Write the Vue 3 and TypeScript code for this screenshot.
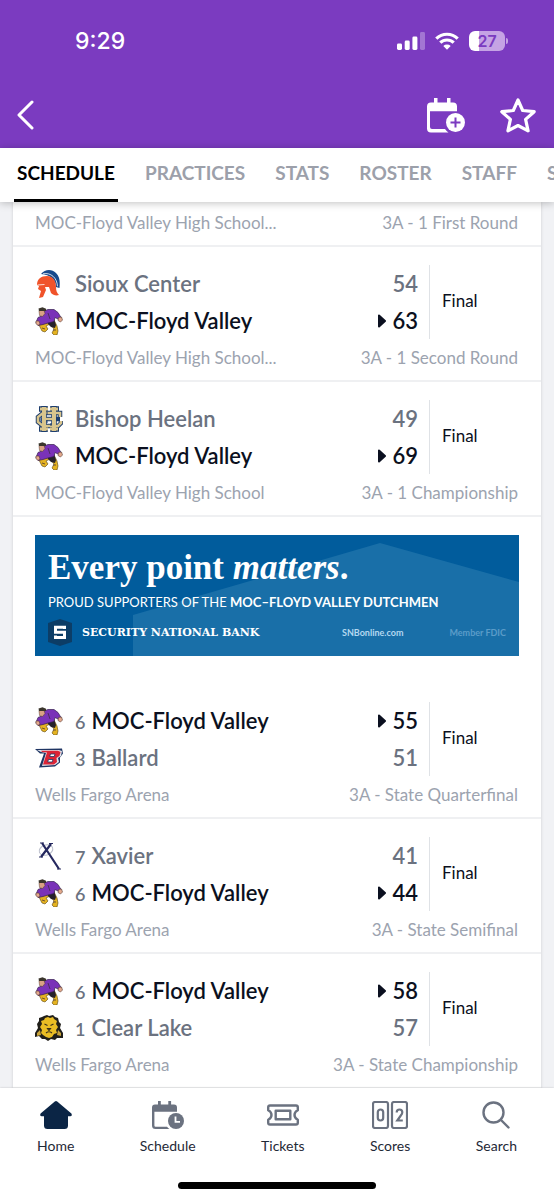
<script setup lang="ts">
import { ref } from 'vue'

interface Team {
  logo: string
  name: string
  score: number
  rank?: number
  winner?: boolean
}

interface Game {
  teams: Team[]
  venue: string
  round: string
}

const tabs: string[] = ['Schedule', 'Practices', 'Stats', 'Roster', 'Staff', 'S']
const activeTab = ref<string>('Schedule')

const moc = (score: number, winner: boolean, rank?: number): Team => ({
  logo: 'moc',
  name: 'MOC-Floyd Valley',
  score,
  winner,
  rank,
})

const earlier: Game[] = [
  {
    teams: [{ logo: 'sioux', name: 'Sioux Center', score: 54 }, moc(63, true)],
    venue: 'MOC-Floyd Valley High School...',
    round: '3A - 1 Second Round',
  },
  {
    teams: [{ logo: 'heelan', name: 'Bishop Heelan', score: 49 }, moc(69, true)],
    venue: 'MOC-Floyd Valley High School',
    round: '3A - 1 Championship',
  },
]

const state: Game[] = [
  {
    teams: [moc(55, true, 6), { logo: 'ballard', name: 'Ballard', score: 51, rank: 3 }],
    venue: 'Wells Fargo Arena',
    round: '3A - State Quarterfinal',
  },
  {
    teams: [{ logo: 'xavier', name: 'Xavier', score: 41, rank: 7 }, moc(44, true, 6)],
    venue: 'Wells Fargo Arena',
    round: '3A - State Semifinal',
  },
  {
    teams: [moc(58, true, 6), { logo: 'clear', name: 'Clear Lake', score: 57, rank: 1 }],
    venue: 'Wells Fargo Arena',
    round: '3A - State Championship',
  },
]

const groups = [
  { id: 'regional', games: earlier },
  { id: 'state', games: state },
]
</script>

<template>
  <div class="app">
    <svg class="defs" aria-hidden="true">
      <symbol id="logo-moc" viewBox="0 0 28 28">
        <path d="M6 14 4 18l3 6 3 1 3-3-2-3 4-2 4 5-2 4 2 2h3l1-4-1-5-3-6z" fill="#e5b321" stroke="#5a4512" stroke-width=".6" />
        <path d="m12 13 7-1 2 6-1 3-4-1-3-3z" fill="#26222b" />
        <path d="M9 4 13 2.500l6 0 4 3 3 5-2 2-4-2-1 4-6 1.500-5 1.500-5 1-2-3 2-5 5-2z" fill="#7a32b8" stroke="#35204f" stroke-width=".7" />
        <path d="m23.500 10.500 3-.5 1 3-2 2-2.500-1.500zM1 14l3 0 1 3-2 1.500-2-2z" fill="#e4a98c" stroke="#573c33" stroke-width=".6" />
        <path d="M4 3.500h5l1 3-2.500 3-3-1z" fill="#d9a184" stroke="#573c33" stroke-width=".5" />
        <path d="m3.500 1.500 4-1.300 3.500 1.500v2.300H4z" fill="#3a352b" />
        <path d="m7 21 3 1M18 23l3 0M13 6l2 6" fill="none" stroke="#3b2a3a" stroke-width=".7" />
      </symbol>
      <symbol id="logo-sioux" viewBox="0 0 28 28">
        <path d="M6 4C10-1 17-1 21 3c4 4 4 9 3.500 15L21 17C21 9 15 5 6 4z" fill="#174a8c" />
        <path d="M8 3.800c8-1.500 14 4 14.500 12.500" fill="none" stroke="#fff" stroke-width=".8" />
        <path d="M2 15C2 9 6 6 12 6c7 0 9 6 9 11 0 4 1 6 3 8-3 1-6 0-8-2l-2-6-4 0 1 3-3 7-4 1 2-7-3-2 1-3z" fill="#f0532a" />
        <path d="m2.500 15 7-.5" stroke="#fff" stroke-width=".8" />
      </symbol>
      <symbol id="logo-heelan" viewBox="0 0 28 28">
        <g fill="none" stroke="#1d3d6d">
          <path d="M9 1v26M19 1v26M4 4h9M15 4h9M4 24h9M15 24h9" stroke-width="5.500" />
          <path d="M25 12V8H8L3 12v5l5 4h15l3-3v-2M8 14h17" stroke-width="4.500" />
        </g>
        <g fill="none" stroke="#d9c58d">
          <path d="M9 2v24M19 2v24" stroke-width="4" />
          <path d="M5 4h8M15 4h8M5 24h8M15 24h8" stroke-width="3" />
          <path d="M25 12V8H8L3 12v5l5 4h15l3-3v-2M10 14h9" stroke-width="2.600" />
        </g>
        <path d="M12 7v3M16 18v3M6 13v3M12 18v-3" fill="none" stroke="#1d3d6d" stroke-width="1" />
      </symbol>
      <symbol id="logo-ballard" viewBox="0 0 28 28">
        <path d="M0 5 27 4.500l1 5-3 4 0 5-5 4-16 1 5-14-4 0z" fill="#1f3563" />
        <path d="M2 6h22l3 1-1 5-3 2 1 4-4 3-13 1 4-13-5-1z" fill="#dfe3ea" />
        <path d="M6 6.800h17l2.500 1.200-1 4-3 2 .5 4-3 2.500H8l4-12-5-.5z" fill="#dc2436" />
        <path d="m15.500 10 4.500 0-.8 2.500h-4.500zM13.500 15.500h4.500l-.8 2.500h-4.500z" fill="#fff" stroke="#1f3563" stroke-width=".8" />
      </symbol>
      <symbol id="logo-xavier" viewBox="0 0 28 28">
        <ellipse cx="11" cy="8" rx="7" ry="5" fill="none" stroke="#b9bdca" stroke-width="1" transform="rotate(-20 11 8)" />
        <path d="m7 1 17 26M16 2 6 15" stroke="#25285f" stroke-width="2.200" fill="none" />
        <path d="M5 1h4M14 1.500h4M4 15h4M22 27h4" stroke="#25285f" stroke-width="1.200" />
      </symbol>
      <symbol id="logo-clear" viewBox="0 0 28 28">
        <path d="m9 2 3-1 2 1 4-1 2 2 3 1 1 4 2 2-1 4 3 5 0 5-6 0-2 2-4-1-3 2-3-2-3 0-3-3-4 1 0-4 3-5-1-4 2-3 0-3 3-1z" fill="#211f1a" />
        <path d="m10 4 3-1 2 1 3-1 1 2 3 2-1 3 2 3-2 3 1 3-3 1-2 3-3 1-3-1-3-2-2-2 1-3-2-3 2-3-1-3 3-1z" fill="#eabd24" />
        <path d="m2 19 3-3 1 5-4 1zM23 16l3 3 0 3-4-1z" fill="#c9a43a" />
        <path d="m9.500 10 3 1.500m6-1.500-3 1.500M12.500 14.500h3L14 16.500zM11 19q3-2.500 6 0" stroke="#39301a" stroke-width="1.100" fill="none" />
      </symbol>
    </svg>

    <header class="header">
      <div class="status">
        <time class="clock">9:29</time>
        <div class="indicators">
          <svg width="28" height="18" viewBox="0 0 28 18" fill="#fff" aria-label="Signal">
            <rect x="0" y="11.500" width="5" height="6.500" rx="1.400" />
            <rect x="7.700" y="8.500" width="5" height="9.500" rx="1.400" />
            <rect x="15.400" y="4.500" width="5" height="13.500" rx="1.400" />
            <rect x="23" y="0" width="5" height="18" rx="1.400" opacity=".3" />
          </svg>
          <svg width="24" height="18" viewBox="0 0 24 18" fill="none" stroke="#fff" stroke-width="3.200" aria-label="Wi-Fi">
            <path d="M1.300 6.600a15.300 15.300 0 0 1 21.400 0" />
            <path d="M5.300 10.700a9.600 9.600 0 0 1 13.400 0" />
            <path d="M8.300 14 12 17.800 15.700 14a5.400 5.400 0 0 0-7.400 0z" fill="#fff" stroke="none" />
          </svg>
          <div class="battery"><span>27</span></div>
        </div>
      </div>
      <div class="actions">
        <button type="button" class="icon-button" aria-label="Back">
          <svg width="18" height="30" viewBox="0 0 18 30" fill="none" stroke="#fff" stroke-width="3" stroke-linecap="round" stroke-linejoin="round">
            <path d="M16 2 3 15l13 13" />
          </svg>
        </button>
        <div class="action-group">
          <button type="button" class="icon-button" aria-label="Add to calendar">
            <svg width="38" height="35" viewBox="0 0 38 35">
              <path d="M7 0h3.500v4.500H20V0h3.500v4.500H26a4 4 0 0 1 4 4v4.800H3V29q0 2 2 2h13q1.500 2 3.500 3.500H4a4 4 0 0 1-4-4v-22a4 4 0 0 1 4-4h3z" fill="#fff" />
              <circle cx="28.500" cy="24.500" r="9.500" fill="#fff" />
              <path d="M28.500 19.500v10M23.500 24.500h10" stroke="#7b3bc0" stroke-width="2" />
            </svg>
          </button>
          <button type="button" class="icon-button" aria-label="Favorite">
            <svg width="36" height="35" viewBox="0 0 36 35" fill="none" stroke="#fff" stroke-width="3.200" stroke-linejoin="round">
              <path d="m18 2 4.700 10.500 11.500 1.200-8.600 7.700 2.500 11.400L18 27.500 7.900 32.800l2.500-11.400-8.600-7.700 11.500-1.200z" />
            </svg>
          </button>
        </div>
      </div>
    </header>

    <nav class="tabs" aria-label="Team pages">
      <button
        v-for="tab in tabs"
        :key="tab"
        type="button"
        class="tab"
        :class="{ active: tab === activeTab }"
        @click="activeTab = tab"
      >
        {{ tab }}
      </button>
    </nav>

    <main class="content">
      <div class="card">
        <div class="game partial">
          <div class="meta">
            <span>MOC-Floyd Valley High School...</span>
            <span>3A - 1 First Round</span>
          </div>
        </div>
        <template v-for="group in groups" :key="group.id">
          <a v-if="group.id === 'state'" href="#" class="ad">
            <svg class="ad-shape" viewBox="0 0 484 121" preserveAspectRatio="none" aria-hidden="true">
              <path d="M98 121V80L345 8l139 39v74z" fill="#196fa8" />
            </svg>
            <span class="ad-title">Every point <em>matters</em>.</span>
            <span class="ad-sub">PROUD SUPPORTERS OF THE <b>MOC–FLOYD VALLEY DUTCHMEN</b></span>
            <span class="ad-foot">
              <svg width="24" height="27" viewBox="0 0 24 27" aria-hidden="true">
                <path d="m12 0 12 4v19l-12 4-12-4V4z" fill="#0c3d66" />
                <path d="M16.500 10V8.300H7.500v5h9v5.200H7.500V16.500" fill="none" stroke="#fff" stroke-width="3" />
              </svg>
              <span class="bank">SECURITY NATIONAL BANK</span>
              <span class="site">SNBonline.com</span>
              <span class="fdic">Member FDIC</span>
            </span>
          </a>
          <article v-for="game in group.games" :key="game.round" class="game">
            <div class="matchup">
              <div class="teams">
                <div v-for="team in game.teams" :key="team.name" class="team" :class="{ winner: team.winner }">
                  <svg class="logo" width="28" height="28" aria-hidden="true"><use :href="'#logo-' + team.logo" /></svg>
                  <span class="name"><span v-if="team.rank" class="rank">{{ team.rank }}</span>{{ team.name }}</span>
                  <svg v-if="team.winner" width="8" height="14" viewBox="0 0 8 14" aria-label="Winner">
                    <path d="M1 1.500v11L7 7z" fill="#0b1020" stroke="#0b1020" stroke-width="2" stroke-linejoin="round" />
                  </svg>
                  <span class="score">{{ team.score }}</span>
                </div>
              </div>
              <div class="result">Final</div>
            </div>
            <div class="meta">
              <span>{{ game.venue }}</span>
              <span>{{ game.round }}</span>
            </div>
          </article>
        </template>
      </div>
    </main>

    <footer class="bottom">
      <nav class="bottom-nav" aria-label="Main">
        <a href="#" class="nav-item">
          <svg width="32" height="28" viewBox="0 0 32 28">
            <path d="M14.800.5q1.200-.9 2.400 0L31.400 12.500q1.200 2.500-1.200 2.800H28V24.500q0 3.500-3.500 3.500h-17Q4 28 4 24.500V15.300H1.800Q-.6 15 .6 12.500z" fill="#0b2545" />
          </svg>
          Home
        </a>
        <a href="#" class="nav-item">
          <svg width="32" height="28" viewBox="0 0 32 28">
            <path d="M6 0h2.800v3.500h7.500V0h2.800v3.500H22a3 3 0 0 1 3 3v4.200H2.400V24.500q0 1.200 1.200 1.200H15q1 1.500 2.500 2.300H3.500A3.500 3.500 0 0 1 0 24.500v-18a3 3 0 0 1 3-3h3z" fill="#6b7280" />
            <circle cx="24" cy="20" r="8" fill="#6b7280" />
            <path d="M23.500 15.500v5.300H28" fill="none" stroke="#fff" stroke-width="1.800" />
          </svg>
          Schedule
        </a>
        <a href="#" class="nav-item">
          <svg width="32" height="28" viewBox="0 0 32 28" fill="none" stroke="#6b7280" stroke-width="2.400" stroke-linejoin="round">
            <path d="M3 4.500h26q1.800 0 1.800 1.800v3Q27.500 11 27.500 14t3.300 4.700v3q0 1.800-1.800 1.800H3q-1.800 0-1.800-1.800v-3Q4.500 17 4.500 14T1.200 9.300v-3Q1.200 4.500 3 4.500z" />
            <rect x="8.700" y="9.700" width="14.600" height="8.600" />
          </svg>
          Tickets
        </a>
        <a href="#" class="nav-item">
          <svg width="36" height="28" viewBox="0 0 36 28" fill="none" stroke="#6b7280" stroke-width="2.200">
            <rect x="1" y="1" width="15" height="26" rx="2" />
            <rect x="20" y="1" width="15" height="26" rx="2" />
            <rect x="5.800" y="8.500" width="5.400" height="11" rx="2.700" />
            <path d="M24.700 11.500q0-3 2.800-3t2.800 2.800q0 1.500-1.500 3.200l-3.500 5h5.500" />
          </svg>
          Scores
        </a>
        <a href="#" class="nav-item">
          <svg width="28" height="28" viewBox="0 0 28 28" fill="none" stroke="#6b7280" stroke-width="2.400" stroke-linecap="round">
            <circle cx="11.500" cy="11.500" r="10" />
            <path d="m19 19 7.500 7.500" />
          </svg>
          Search
        </a>
      </nav>
      <div class="home-bar"></div>
    </footer>
  </div>
</template>

<style>
html,
body,
#app {
  height: 100%;
}
body {
  margin: 0;
}
</style>

<style scoped>
.app {
  display: flex;
  flex-direction: column;
  height: 100vh;
  overflow: hidden;
  background: #f1f2f5;
  font-family: Lato, "Liberation Sans", sans-serif;
  color: #0b1020;
}
.defs {
  position: absolute;
  width: 0;
  height: 0;
}
button {
  border: 0;
  background: none;
  padding: 0;
  font: inherit;
  color: inherit;
}
a {
  color: inherit;
  text-decoration: none;
}
svg {
  display: block;
  flex: none;
}
.header {
  flex: none;
  background: #7b3bc0;
  color: #fff;
}
.status {
  display: flex;
  align-items: center;
  justify-content: space-between;
  height: 82px;
  padding: 0 49px 0 75px;
}
.clock {
  font: 500 23px/28px Inter, sans-serif;
}
.indicators {
  display: flex;
  align-items: center;
  gap: 10px;
}
.battery {
  position: relative;
  width: 36px;
  height: 20px;
  border-radius: 6px;
  background: linear-gradient(90deg, #fff 10px, #c5a3e4 10px);
  color: #7b3bc0;
  text-align: center;
  font: 600 16px/20px Inter, sans-serif;
}
.battery::after {
  content: "";
  position: absolute;
  right: -3px;
  top: 7px;
  width: 2px;
  height: 6px;
  border-radius: 0 2px 2px 0;
  background: #c5a3e4;
}
.actions {
  display: flex;
  align-items: center;
  justify-content: space-between;
  height: 66px;
  padding: 0 18px 0 16px;
}
.action-group {
  display: flex;
  align-items: center;
  gap: 35px;
}
.tabs {
  position: relative;
  z-index: 1;
  flex: none;
  display: flex;
  gap: 24px;
  height: 54px;
  padding: 0 14px;
  overflow: hidden;
  background: #fff;
  box-shadow: 0 1px 8px rgba(0, 0, 0, 0.25);
}
.tab {
  flex: none;
  padding: 0 3px 2px;
  border-bottom: 3px solid transparent;
  color: #9ca0aa;
  font-size: 19px;
  font-weight: 700;
  text-transform: uppercase;
}
.tab.active {
  color: #000;
  border-color: #000;
}
.content {
  flex: 1;
  min-height: 0;
  overflow: hidden;
  padding: 0 13px;
}
.card {
  background: #fff;
  box-shadow: 0 0 3px rgba(0, 0, 0, 0.15);
}
.game {
  padding: 18px 23px 3px 22px;
  border-bottom: 2px solid #eff0f2;
}
.partial {
  padding-top: 2px;
}
.matchup {
  display: flex;
}
.teams {
  flex: 1;
  padding-right: 11px;
  border-right: 1px solid #dfe2e6;
}
.team {
  display: flex;
  align-items: center;
  height: 37px;
  color: #6b7280;
  font-size: 22px;
  font-weight: 600;
}
.winner {
  color: #0b1020;
}
.name {
  flex: 1;
  padding-left: 12px;
}
.rank {
  margin-right: 6px;
  color: #6b7280;
  font-size: 18px;
}
.score {
  padding-left: 6px;
}
.result {
  box-sizing: border-box;
  display: flex;
  align-items: center;
  width: 88px;
  padding: 0 0 3px 12px;
  font-size: 17px;
}
.meta {
  display: flex;
  justify-content: space-between;
  color: #9ca3af;
  font-size: 17px;
  line-height: 38px;
}
.ad {
  position: relative;
  display: flex;
  flex-direction: column;
  height: 121px;
  margin: 18px 22px 28px;
  box-sizing: border-box;
  padding: 12px 13px 8px;
  background: #015c9c;
  color: #fff;
}
.ad-shape {
  position: absolute;
  inset: 0;
  width: 100%;
  height: 100%;
}
.ad-title,
.ad-sub,
.ad-foot {
  position: relative;
}
.ad-title {
  font: 700 35px/42px "Liberation Serif", serif;
}
.ad-sub {
  font-size: 13px;
  line-height: 26px;
}
.ad-foot {
  display: flex;
  align-items: center;
  margin-top: 4px;
}
.bank {
  flex: 1;
  padding-left: 10px;
  font: 700 11px/16px "DejaVu Serif", serif;
}
.site {
  color: #b4d8f0;
  font-size: 9px;
  font-weight: 700;
}
.fdic {
  margin-left: 46px;
  color: #5b9cc8;
  font-size: 9px;
  font-weight: 700;
}
.bottom {
  position: relative;
  flex: none;
  height: 112px;
  box-sizing: border-box;
  padding: 13px 37px 0;
  background: #fff;
  box-shadow: 0 0 2px rgba(0, 0, 0, 0.2);
}
.bottom-nav {
  display: flex;
  justify-content: space-between;
}
.nav-item {
  display: flex;
  flex-direction: column;
  align-items: center;
  gap: 8px;
  color: #1f2937;
  font-size: 14px;
  line-height: 18px;
}
.home-bar {
  width: 198px;
  height: 7px;
  margin: 27px auto 0;
  border-radius: 4px;
  background: #000;
}
</style>
